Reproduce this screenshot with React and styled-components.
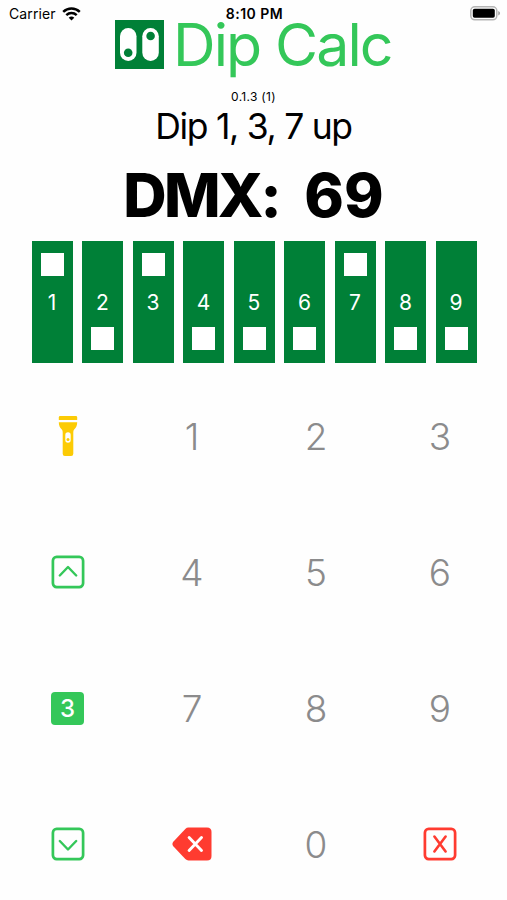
import React, { useState } from 'react';
import styled, { createGlobalStyle, ThemeProvider } from 'styled-components';

const theme = {
  colors: {
    board: '#008037',
    green: '#34c759',
    red: '#ff3b30',
    yellow: '#fccb05',
    gray: '#8b8b8c',
    black: '#000000',
    white: '#ffffff',
  },
};

const GlobalStyle = createGlobalStyle`
  * {
    box-sizing: border-box;
  }
  body {
    margin: 0;
    background: #fefefe;
    font-family: Inter, 'Liberation Sans', sans-serif;
  }
  button {
    border: none;
    padding: 0;
    background: none;
    font-family: inherit;
  }
`;

const Screen = styled.main`
  display: flex;
  flex-direction: column;
  width: 507px;
  height: 900px;
  overflow: hidden;
  color: ${(props) => props.theme.colors.black};
`;

const StatusBar = styled.header`
  display: grid;
  grid-template-columns: 1fr auto 1fr;
  align-items: center;
  flex: none;
  height: 20px;
  padding: 6px 6px 0 8px;
`;

const Carrier = styled.div`
  display: flex;
  align-items: center;
  gap: 6px;
  padding-left: 1px;
  font-size: 14px;
  line-height: 14px;
  letter-spacing: 0.1px;
`;

const Clock = styled.time`
  font-size: 14px;
  font-weight: 600;
  line-height: 14px;
  letter-spacing: 0.5px;
`;

const BatteryIcon = styled.svg`
  justify-self: end;
`;

const TitleRow = styled.div`
  display: flex;
  align-items: center;
  flex: none;
  gap: 9px;
  height: 49px;
  padding-left: 115px;
`;

const Title = styled.h1`
  margin: 0;
  color: ${(props) => props.theme.colors.green};
  font-size: 59px;
  font-weight: 400;
  line-height: 49px;
  letter-spacing: -1.9px;
  white-space: nowrap;
`;

const Version = styled.p`
  flex: none;
  margin: 20px 0 0;
  font-size: 12px;
  line-height: 16px;
  letter-spacing: 0.3px;
  text-align: center;
`;

const DipText = styled.p`
  flex: none;
  margin: 0;
  font-size: 35.5px;
  line-height: 44px;
  letter-spacing: -1.3px;
  text-align: center;
`;

const DmxText = styled.p`
  flex: none;
  margin: 10px 0 0;
  font-size: 60px;
  font-weight: 800;
  font-feature-settings: 'calt' 0;
  line-height: 72px;
  letter-spacing: -2.8px;
  word-spacing: 15px;
  text-align: center;
`;

const DmxValue = styled.span`
  letter-spacing: 0;
`;

const SwitchBoard = styled.div`
  display: flex;
  flex: none;
  gap: 9.5px;
  margin-top: 10px;
  padding-left: 31.5px;
`;

const DipSwitch = styled.button`
  display: grid;
  grid-template-rows: 23px 51px 23px;
  justify-items: center;
  align-items: center;
  width: 41px;
  height: 122px;
  padding: 12px 0 13px;
  background: ${(props) => props.theme.colors.board};
  color: ${(props) => props.theme.colors.white};
`;

const SwitchKnob = styled.span`
  grid-row: ${({ $up }) => ($up ? 1 : 3)};
  grid-column: 1;
  width: 23px;
  height: 23px;
  background: ${(props) => props.theme.colors.white};
`;

const SwitchNumber = styled.span`
  grid-row: 2;
  grid-column: 1;
  padding-top: 3px;
  font-size: 21px;
  line-height: 24px;
`;

const Keypad = styled.div`
  display: grid;
  grid-template-columns: repeat(4, 124px);
  grid-template-rows: repeat(4, 136px);
  flex: none;
  margin-top: 5px;
  padding-left: 6px;
`;

const Key = styled.button`
  display: flex;
  align-items: center;
  justify-content: center;
  color: ${(props) => props.theme.colors[props.$color || 'gray']};
  font-size: 37px;
  font-weight: 300;
  line-height: 44px;
`;

const KeyDigit = styled.span`
  padding-top: 2px;
`;

const CountBadge = styled.span`
  width: 33px;
  height: 33px;
  margin-right: 1px;
  border-radius: 4px;
  background: ${(props) => props.theme.colors.green};
  color: ${(props) => props.theme.colors.white};
  font-size: 24px;
  font-weight: 500;
  line-height: 33px;
  text-align: center;
`;

const WifiIcon = () => (
  <svg width="19" height="14" viewBox="0 0 19 14" fill="none" stroke="#000" strokeWidth="2.5">
    <path d="M1.2 4.9C6 .4 13 .4 17.8 4.9" />
    <path d="M4.3 8.1C7.3 5.3 11.7 5.3 14.7 8.1" />
    <path d="M6.7 10.7C8.4 9.2 10.6 9.2 12.3 10.7L9.5 13.6Z" fill="#000" stroke="none" />
  </svg>
);

const Battery = () => (
  <BatteryIcon width="31" height="15" viewBox="0 0 31 15">
    <rect x="0.8" y="0.8" width="26" height="13" rx="4" fill="#fff" stroke="#b5b5b5" strokeWidth="1.5" />
    <rect x="2.8" y="2.8" width="22" height="9" rx="1.8" fill="#000" />
    <path d="M28.2 5.1C30.7 6 30.7 8.7 28.2 9.5Z" fill="#a8a8a8" />
  </BatteryIcon>
);

const Logo = () => (
  <svg width="49" height="49" viewBox="0 0 49 49">
    <rect width="49" height="49" fill="#008037" />
    <rect x="5" y="8" width="16.5" height="33" rx="8.25" fill="#fff" />
    <rect x="27.3" y="8" width="16.5" height="33" rx="8.25" fill="#fff" />
    <circle cx="13.2" cy="32.8" r="4.3" fill="#008037" />
    <circle cx="35.6" cy="16" r="4.3" fill="#008037" />
  </svg>
);

const FlashlightIcon = () => (
  <svg width="20" height="42" viewBox="0 0 20 42" fill="currentColor">
    <path d="M2.2 1H17.8Q19.2 1 19.2 2.4V4.9H.8V2.4Q.8 1 2.2 1Z" />
    <path
      fillRule="evenodd"
      d="M.8 7.2H19.2C19.2 10.8 18 12.5 16.4 14.3C15.5 15.4 15.3 16.3 15.3 17.8V38.8Q15.3 41 13.1 41H6.9Q4.7 41 4.7 38.8V17.8C4.7 16.3 4.5 15.4 3.6 14.3C2 12.5 .8 10.8 .8 7.2ZM10 17.2A2.7 2.7 0 0 0 7.3 19.9V25A2.7 2.7 0 0 0 12.7 25V19.9A2.7 2.7 0 0 0 10 17.2Z"
    />
    <circle cx="10" cy="24.5" r="1.5" />
  </svg>
);

const SquareIcon = ({ d, strokeWidth = 2.4 }) => (
  <svg width="34" height="34" viewBox="0 0 34 34" fill="none" stroke="currentColor">
    <rect x="1.9" y="1.9" width="30.2" height="30.2" rx="3.8" strokeWidth="2.7" />
    <path d={d} strokeWidth={strokeWidth} strokeLinecap="round" strokeLinejoin="round" />
  </svg>
);

const DeleteIcon = () => (
  <svg width="40" height="34" viewBox="0 0 40 34">
    <path
      d="M16.5.5H35Q39.5.5 39.5 5V29Q39.5 33.5 35 33.5H16.5Q14.7 33.5 13.3 32.1L1.5 19.4Q-.7 17 1.5 14.6L13.3 1.9Q14.7.5 16.5.5Z"
      fill="currentColor"
    />
    <path d="M17.1 10.5L29.5 23.5M29.5 10.5L17.1 23.5" stroke="#fff" strokeWidth="2.9" strokeLinecap="round" />
  </svg>
);

const App = () => {
  const [dmx, setDmx] = useState(69);

  const switches = [1, 2, 3, 4, 5, 6, 7, 8, 9];
  const isUp = (n) => Boolean(dmx & (1 << (n - 1)));
  const upSwitches = switches.filter(isUp);

  const changeDmx = (value) => {
    setDmx(Math.max(0, Math.min(511, value)));
  };

  const numberKey = (n) => (
    <Key onClick={() => changeDmx(dmx * 10 + n)}>
      <KeyDigit>{n}</KeyDigit>
    </Key>
  );

  return (
    <ThemeProvider theme={theme}>
      <GlobalStyle />
      <Screen>
        <StatusBar>
          <Carrier>
            Carrier
            <WifiIcon />
          </Carrier>
          <Clock>8:10 PM</Clock>
          <Battery />
        </StatusBar>

        <TitleRow>
          <Logo />
          <Title>Dip Calc</Title>
        </TitleRow>
        <Version>0.1.3 (1)</Version>
        <DipText>Dip {upSwitches.join(', ')} up</DipText>
        <DmxText>
          DMX: <DmxValue>{dmx}</DmxValue>
        </DmxText>

        <SwitchBoard>
          {switches.map((n) => (
            <DipSwitch key={n} onClick={() => changeDmx(dmx ^ (1 << (n - 1)))}>
              <SwitchKnob $up={isUp(n)} />
              <SwitchNumber>{n}</SwitchNumber>
            </DipSwitch>
          ))}
        </SwitchBoard>

        <Keypad>
          <Key $color="yellow" aria-label="Flashlight">
            <FlashlightIcon />
          </Key>
          {numberKey(1)}
          {numberKey(2)}
          {numberKey(3)}

          <Key $color="green" aria-label="Up" onClick={() => changeDmx(dmx + upSwitches.length)}>
            <SquareIcon d="M8.8 20.5L17 12L25.2 20.5" />
          </Key>
          {numberKey(4)}
          {numberKey(5)}
          {numberKey(6)}

          <Key>
            <CountBadge>{upSwitches.length}</CountBadge>
          </Key>
          {numberKey(7)}
          {numberKey(8)}
          {numberKey(9)}

          <Key $color="green" aria-label="Down" onClick={() => changeDmx(dmx - upSwitches.length)}>
            <SquareIcon d="M8.8 14L17 22.5L25.2 14" />
          </Key>
          <Key $color="red" aria-label="Delete" onClick={() => changeDmx(Math.floor(dmx / 10))}>
            <DeleteIcon />
          </Key>
          {numberKey(0)}
          <Key $color="red" aria-label="Clear" onClick={() => changeDmx(0)}>
            <SquareIcon d="M11.4 9.5L22.6 24.5M22.6 9.5L11.4 24.5" strokeWidth={2.6} />
          </Key>
        </Keypad>
      </Screen>
    </ThemeProvider>
  );
};

export default App;
